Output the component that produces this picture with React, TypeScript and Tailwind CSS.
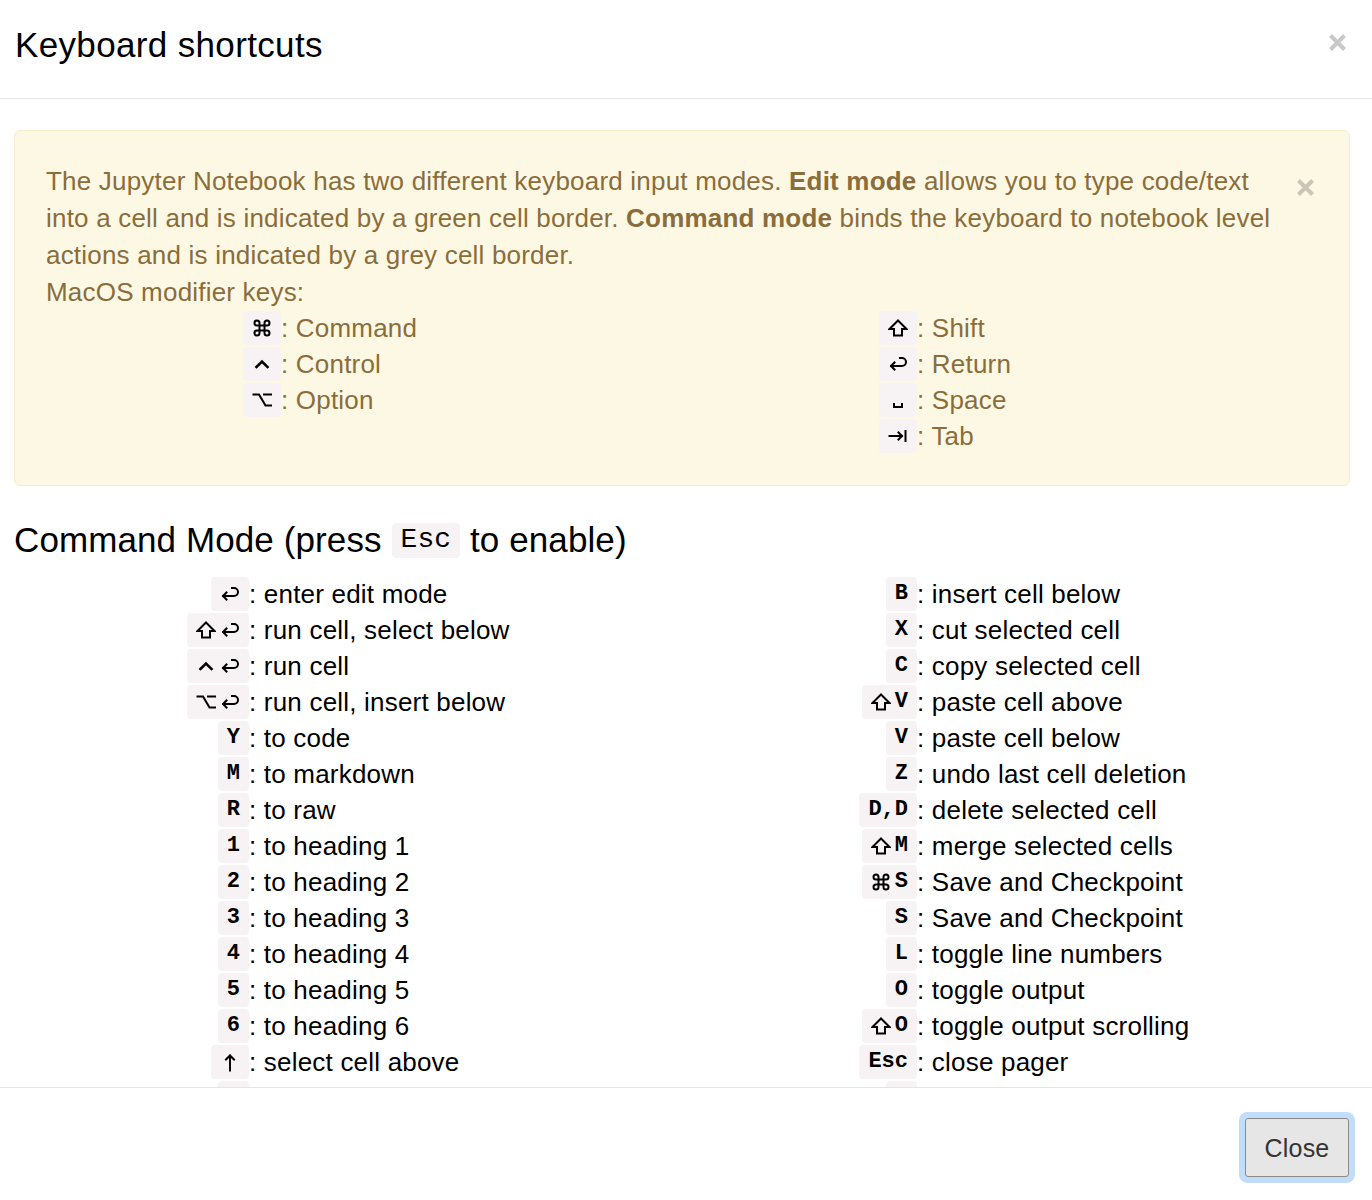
import React from 'react'

type Part = { t: string; g?: boolean }
type Shortcut = { keys: Part[]; label: string }

const k = (s: string): Part => ({ t: s })
const g = (s: string): Part => ({ t: s, g: true })

const left: Shortcut[] = [
  { keys: [g('enter')], label: 'enter edit mode' },
  { keys: [g('shift'), g('enter')], label: 'run cell, select below' },
  { keys: [g('ctrl'), g('enter')], label: 'run cell' },
  { keys: [g('alt'), g('enter')], label: 'run cell, insert below' },
  { keys: [k('Y')], label: 'to code' },
  { keys: [k('M')], label: 'to markdown' },
  { keys: [k('R')], label: 'to raw' },
  { keys: [k('1')], label: 'to heading 1' },
  { keys: [k('2')], label: 'to heading 2' },
  { keys: [k('3')], label: 'to heading 3' },
  { keys: [k('4')], label: 'to heading 4' },
  { keys: [k('5')], label: 'to heading 5' },
  { keys: [k('6')], label: 'to heading 6' },
  { keys: [g('up')], label: 'select cell above' },
  { keys: [k('K')], label: 'select cell above' },
  { keys: [k('J')], label: 'select cell below' },
]

const right: Shortcut[] = [
  { keys: [k('B')], label: 'insert cell below' },
  { keys: [k('X')], label: 'cut selected cell' },
  { keys: [k('C')], label: 'copy selected cell' },
  { keys: [g('shift'), k('V')], label: 'paste cell above' },
  { keys: [k('V')], label: 'paste cell below' },
  { keys: [k('Z')], label: 'undo last cell deletion' },
  { keys: [k('D,D')], label: 'delete selected cell' },
  { keys: [g('shift'), k('M')], label: 'merge selected cells' },
  { keys: [g('cmd'), k('S')], label: 'Save and Checkpoint' },
  { keys: [k('S')], label: 'Save and Checkpoint' },
  { keys: [k('L')], label: 'toggle line numbers' },
  { keys: [k('O')], label: 'toggle output' },
  { keys: [g('shift'), k('O')], label: 'toggle output scrolling' },
  { keys: [k('Esc')], label: 'close pager' },
  { keys: [k('Q')], label: 'close pager' },
  { keys: [g('shift'), k('L')], label: 'toggle all line numbers' },
]

const modsLeft: Shortcut[] = [
  { keys: [g('cmd')], label: 'Command' },
  { keys: [g('ctrl')], label: 'Control' },
  { keys: [g('alt')], label: 'Option' },
]

const modsRight: Shortcut[] = [
  { keys: [g('shift')], label: 'Shift' },
  { keys: [g('enter')], label: 'Return' },
  { keys: [g('space')], label: 'Space' },
  { keys: [g('tab')], label: 'Tab' },
]

// small drawings of the mac modifier key symbols
function Glyph({ name }: { name: string }) {
  const common = {
    fill: 'none',
    stroke: '#000',
    strokeWidth: 2,
    strokeLinecap: 'square' as const,
    strokeLinejoin: 'miter' as const,
  }
  if (name === 'cmd') {
    return (
      <svg width="20" height="20" viewBox="0 0 24 24" {...common} strokeWidth={2.4} strokeLinecap="round">
        <path d="M15 6v12a3 3 0 1 0 3-3H6a3 3 0 1 0 3 3V6a3 3 0 1 0-3 3h12a3 3 0 1 0-3-3" />
      </svg>
    )
  }
  const paths: Record<string, string> = {
    shift: 'M10 2.5 L18.5 11 H14 V17.5 H6 V11 H1.5 Z',
    enter: 'M12 4 H14 A4 4 0 0 1 14 12 H3 M6.5 8.5 L3 12 L6.5 15.5',
    ctrl: 'M4.5 13 L10 7.5 L15.5 13',
    alt: 'M1.5 4.5 H7 L13.5 15.5 H19 M12 4.5 H19',
    up: 'M10 18.5 V3.5 M6 7.5 L10 3.5 L14 7.5',
    space: 'M6 14 V17 H14 V14',
    tab: 'M1.5 10 H14 M10.5 6.5 L14 10 L10.5 13.5 M17.5 5 V15',
  }
  return (
    <svg width="20" height="20" viewBox="0 0 20 20" {...common} strokeWidth={name === 'ctrl' ? 2.6 : 2}>
      <path d={paths[name]} />
    </svg>
  )
}

function Keys({ parts }: { parts: Part[] }) {
  return (
    <span className="flex h-[34px] items-center gap-[4px] rounded-[4px] bg-[#f7f2f4] px-[9px] text-black">
      {parts.map((p, i) =>
        p.g ? (
          <Glyph key={i} name={p.t} />
        ) : (
          <span
            key={i}
            className="font-['Liberation_Mono',monospace] text-[22px] font-bold leading-none tracking-normal"
          >
            {p.t}
          </span>
        ),
      )}
    </span>
  )
}

function Row({ s }: { s: Shortcut }) {
  return (
    <div className="flex h-[36px] items-center">
      <div className="flex w-[235px] shrink-0 justify-end">
        <Keys parts={s.keys} />
      </div>
      <span className="whitespace-pre">{': ' + s.label}</span>
    </div>
  )
}

function CloseX({ color }: { color: string }) {
  return (
    <svg width="19" height="19" viewBox="0 0 19 19">
      <path d="M2.5 2.5 L16.5 16.5 M16.5 2.5 L2.5 16.5" stroke={color} strokeWidth="4" />
    </svg>
  )
}

export default function App() {
  return (
    <div className="flex h-[1200px] w-[1372px] flex-col overflow-hidden bg-white font-['Liberation_Sans',Arial,sans-serif] text-[26px] leading-[36px] tracking-[0.2px] text-black">
      {/* header */}
      <div className="flex h-[99px] shrink-0 items-start justify-between border-b border-[#e5e5e5] pl-[15px] pr-[25px]">
        <h4 className="pt-[21px] text-[35px] leading-[48px] tracking-[0.35px]">Keyboard shortcuts</h4>
        <div className="pt-[33px]">
          <CloseX color="#c8c8c8" />
        </div>
      </div>

      {/* body */}
      <div className="min-h-0 flex-1 overflow-hidden pl-[14px] pr-[22px] pt-[31px]">
        <div className="relative rounded-[6px] border border-[#faebcc] bg-[#fcf8e3] px-[31px] pb-[31px] pt-[32px] text-[#8a6d3b]">
          <div className="absolute right-[34px] top-[47px]">
            <CloseX color="#cac5b4" />
          </div>
          <p className="pr-[34px] leading-[37px]">
            The Jupyter Notebook has two different keyboard input modes. <b>Edit mode</b> allows you
            to type code/text into a cell and is indicated by a green cell border.{' '}
            <b>Command mode</b> binds the keyboard to notebook level actions and is indicated by a
            grey cell border.
          </p>
          <div>MacOS modifier keys:</div>
          <div className="grid grid-cols-2">
            <div>
              {modsLeft.map((s, i) => (
                <Row key={i} s={s} />
              ))}
            </div>
            <div>
              {modsRight.map((s, i) => (
                <Row key={i} s={s} />
              ))}
            </div>
          </div>
        </div>

        <h4 className="mt-[33px] flex items-center text-[35px] leading-[42px] tracking-[0.1px]">
          Command Mode (press
          <code className="mx-[10px] flex h-[35px] items-center rounded-[4px] bg-[#f7f2f4] px-[9px] font-['Liberation_Mono',monospace] text-[28px] tracking-normal">
            Esc
          </code>
          to enable)
        </h4>

        <div className="mt-[15px] grid grid-cols-2">
          <div>
            {left.map((s, i) => (
              <Row key={i} s={s} />
            ))}
          </div>
          <div>
            {right.map((s, i) => (
              <Row key={i} s={s} />
            ))}
          </div>
        </div>
      </div>

      {/* footer */}
      <div className="flex h-[113px] shrink-0 justify-end border-t border-[#e5e5e5] pr-[23px] pt-[30px]">
        <button className="h-[59px] w-[104px] rounded-[3px] border border-[#8c8c8c] bg-[#e6e6e6] text-[25px] text-[#333] shadow-[0_0_0_6px_#c2ddf9]">
          Close
        </button>
      </div>
    </div>
  )
}
